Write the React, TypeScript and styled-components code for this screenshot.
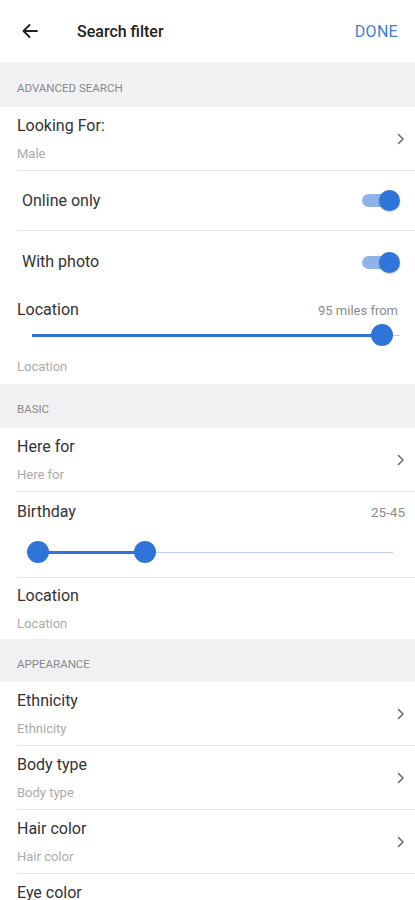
import React from 'react';
import styled, { createGlobalStyle } from 'styled-components';

const GlobalStyle = createGlobalStyle`
  html, body {
    margin: 0;
    padding: 0;
    background: #ffffff;
    font-family: Roboto, "Liberation Sans", Arial, sans-serif;
    -webkit-font-smoothing: antialiased;
  }
  * { box-sizing: border-box; }
`;

const BLUE = '#2f74d8';

const Page = styled.div`
  width: 415px;
  height: 900px;
  overflow: hidden;
  background: #fff;
`;

const Header = styled.header`
  height: 62px;
  display: flex;
  align-items: center;
  padding: 0 17px 0 21px;
`;

const BackButton = styled.button`
  border: 0;
  background: none;
  padding: 0;
  width: 18px;
  height: 18px;
  display: flex;
  align-items: center;
  justify-content: center;
  color: #222;
`;

const Title = styled.h1`
  flex: 1;
  margin: 0 0 0 38px;
  font-size: 16px;
  font-weight: 500;
  color: #222;
`;

const DoneButton = styled.button`
  border: 0;
  background: none;
  padding: 0;
  font-family: inherit;
  font-size: 16px;
  letter-spacing: 0.3px;
  color: #3d7fd9;
`;

const SectionHeader = styled.div<{ $h: number }>`
  height: ${(p) => p.$h}px;
  display: flex;
  align-items: center;
  padding: 6px 0 0 17px;
  background: #f1f1f4;
  font-size: 11.5px;
  color: #8a8a8a;
  text-transform: uppercase;
`;

const Row = styled.div<{ $h: number; $divider?: boolean }>`
  height: ${(p) => p.$h}px;
  margin-left: 17px;
  padding-right: 10px;
  display: flex;
  align-items: center;
  border-bottom: ${(p) => (p.$divider ? '1px solid #e4e4e4' : '0')};
`;

const Texts = styled.div`
  flex: 1;
  display: flex;
  flex-direction: column;
`;

const Label = styled.div<{ $indent?: number }>`
  font-size: 16px;
  line-height: 22px;
  color: #333;
  padding-left: ${(p) => p.$indent ?? 0}px;
`;

const Sub = styled.div`
  margin-top: 8px;
  font-size: 13px;
  line-height: 18px;
  color: #ababab;
`;

const Value = styled.div`
  font-size: 13px;
  color: #8c8c8c;
`;

const Chevron = () => (
  <svg width="10" height="14" viewBox="0 0 10 14">
    <path d="M3.5 2.5 L8 7 L3.5 11.5" fill="none" stroke="#6e6e6e" strokeWidth="1.6" strokeLinecap="round" strokeLinejoin="round" />
  </svg>
);

const ToggleTrack = styled.div`
  position: relative;
  width: 36px;
  height: 13px;
  border-radius: 7px;
  background: #8fb2e8;
  margin-right: 7px;
`;

const ToggleThumb = styled.div`
  position: absolute;
  right: -2px;
  top: -4px;
  width: 21px;
  height: 21px;
  border-radius: 50%;
  background: ${BLUE};
  box-shadow: 0 1px 2px rgba(0, 0, 0, 0.25);
`;

const Toggle = () => (
  <ToggleTrack>
    <ToggleThumb />
  </ToggleTrack>
);

const SliderBlock = styled.div<{ $h: number; $divider?: boolean }>`
  height: ${(p) => p.$h}px;
  margin-left: 17px;
  padding-right: 17px;
  display: flex;
  flex-direction: column;
  border-bottom: ${(p) => (p.$divider ? '1px solid #e4e4e4' : '0')};
`;

const SliderHead = styled.div<{ $top: number }>`
  display: flex;
  justify-content: space-between;
  align-items: center;
  padding-top: ${(p) => p.$top}px;
`;

const Track = styled.div<{ $left: number; $right: number; $top: number }>`
  position: relative;
  height: 22px;
  margin: ${(p) => p.$top}px ${(p) => p.$right}px 0 ${(p) => p.$left}px;
  &::before {
    content: '';
    position: absolute;
    left: 0;
    right: 0;
    top: 10.5px;
    height: 1px;
    background: #bcd0f0;
  }
`;

const Fill = styled.div`
  position: absolute;
  top: 9.5px;
  height: 3px;
  background: ${BLUE};
`;

const Thumb = styled.div`
  position: absolute;
  top: 0;
  width: 22px;
  height: 22px;
  margin-left: -11px;
  border-radius: 50%;
  background: ${BLUE};
`;

const RangeValue = styled(Value)`
  font-size: 13.5px;
  margin-right: -7px;
`;

const SliderSub = styled(Sub)`
  margin-top: 12px;
`;

type NavItem = { label: string; sub: string };

const NavRow = ({ label, sub, divider = true }: NavItem & { divider?: boolean }) => (
  <Row $h={64} $divider={divider}>
    <Texts>
      <Label>{label}</Label>
      <Sub>{sub}</Sub>
    </Texts>
    <Chevron />
  </Row>
);

export default function App() {
  return (
    <Page>
      <GlobalStyle />
      <Header>
        <BackButton aria-label="back">
          <svg width="18" height="18" viewBox="0 0 18 18">
            <path d="M16 9 H2.5 M8.5 3 L2.5 9 L8.5 15" fill="none" stroke="#222" strokeWidth="1.8" strokeLinecap="round" strokeLinejoin="round" />
          </svg>
        </BackButton>
        <Title>Search filter</Title>
        <DoneButton>DONE</DoneButton>
      </Header>

      <SectionHeader $h={45}>Advanced search</SectionHeader>
      <NavRow label="Looking For:" sub="Male" />
      <Row $h={60} $divider>
        <Texts>
          <Label $indent={5}>Online only</Label>
        </Texts>
        <Toggle />
      </Row>
      <Row $h={62}>
        <Texts>
          <Label $indent={5}>With photo</Label>
        </Texts>
        <Toggle />
      </Row>
      <SliderBlock $h={91}>
        <SliderHead $top={6}>
          <Label>Location</Label>
          <Value>95 miles from</Value>
        </SliderHead>
        <Track $left={15} $right={-2} $top={3}>
          <Fill style={{ left: 0, width: '95%' }} />
          <Thumb style={{ left: '95%' }} />
        </Track>
        <SliderSub>Location</SliderSub>
      </SliderBlock>

      <SectionHeader $h={44}>Basic</SectionHeader>
      <NavRow label="Here for" sub="Here for" />
      <SliderBlock $h={86} $divider>
        <SliderHead $top={9}>
          <Label>Birthday</Label>
          <RangeValue>25-45</RangeValue>
        </SliderHead>
        <Track $left={21} $right={5} $top={18}>
          <Fill style={{ left: 0, width: '30%' }} />
          <Thumb style={{ left: 0 }} />
          <Thumb style={{ left: '30%' }} />
        </Track>
      </SliderBlock>
      <Row $h={61}>
        <Texts>
          <Label>Location</Label>
          <Sub>Location</Sub>
        </Texts>
      </Row>

      <SectionHeader $h={43}>Appearance</SectionHeader>
      <NavRow label="Ethnicity" sub="Ethnicity" />
      <NavRow label="Body type" sub="Body type" />
      <NavRow label="Hair color" sub="Hair color" />
      <NavRow label="Eye color" sub="Eye color" />
    </Page>
  );
}
